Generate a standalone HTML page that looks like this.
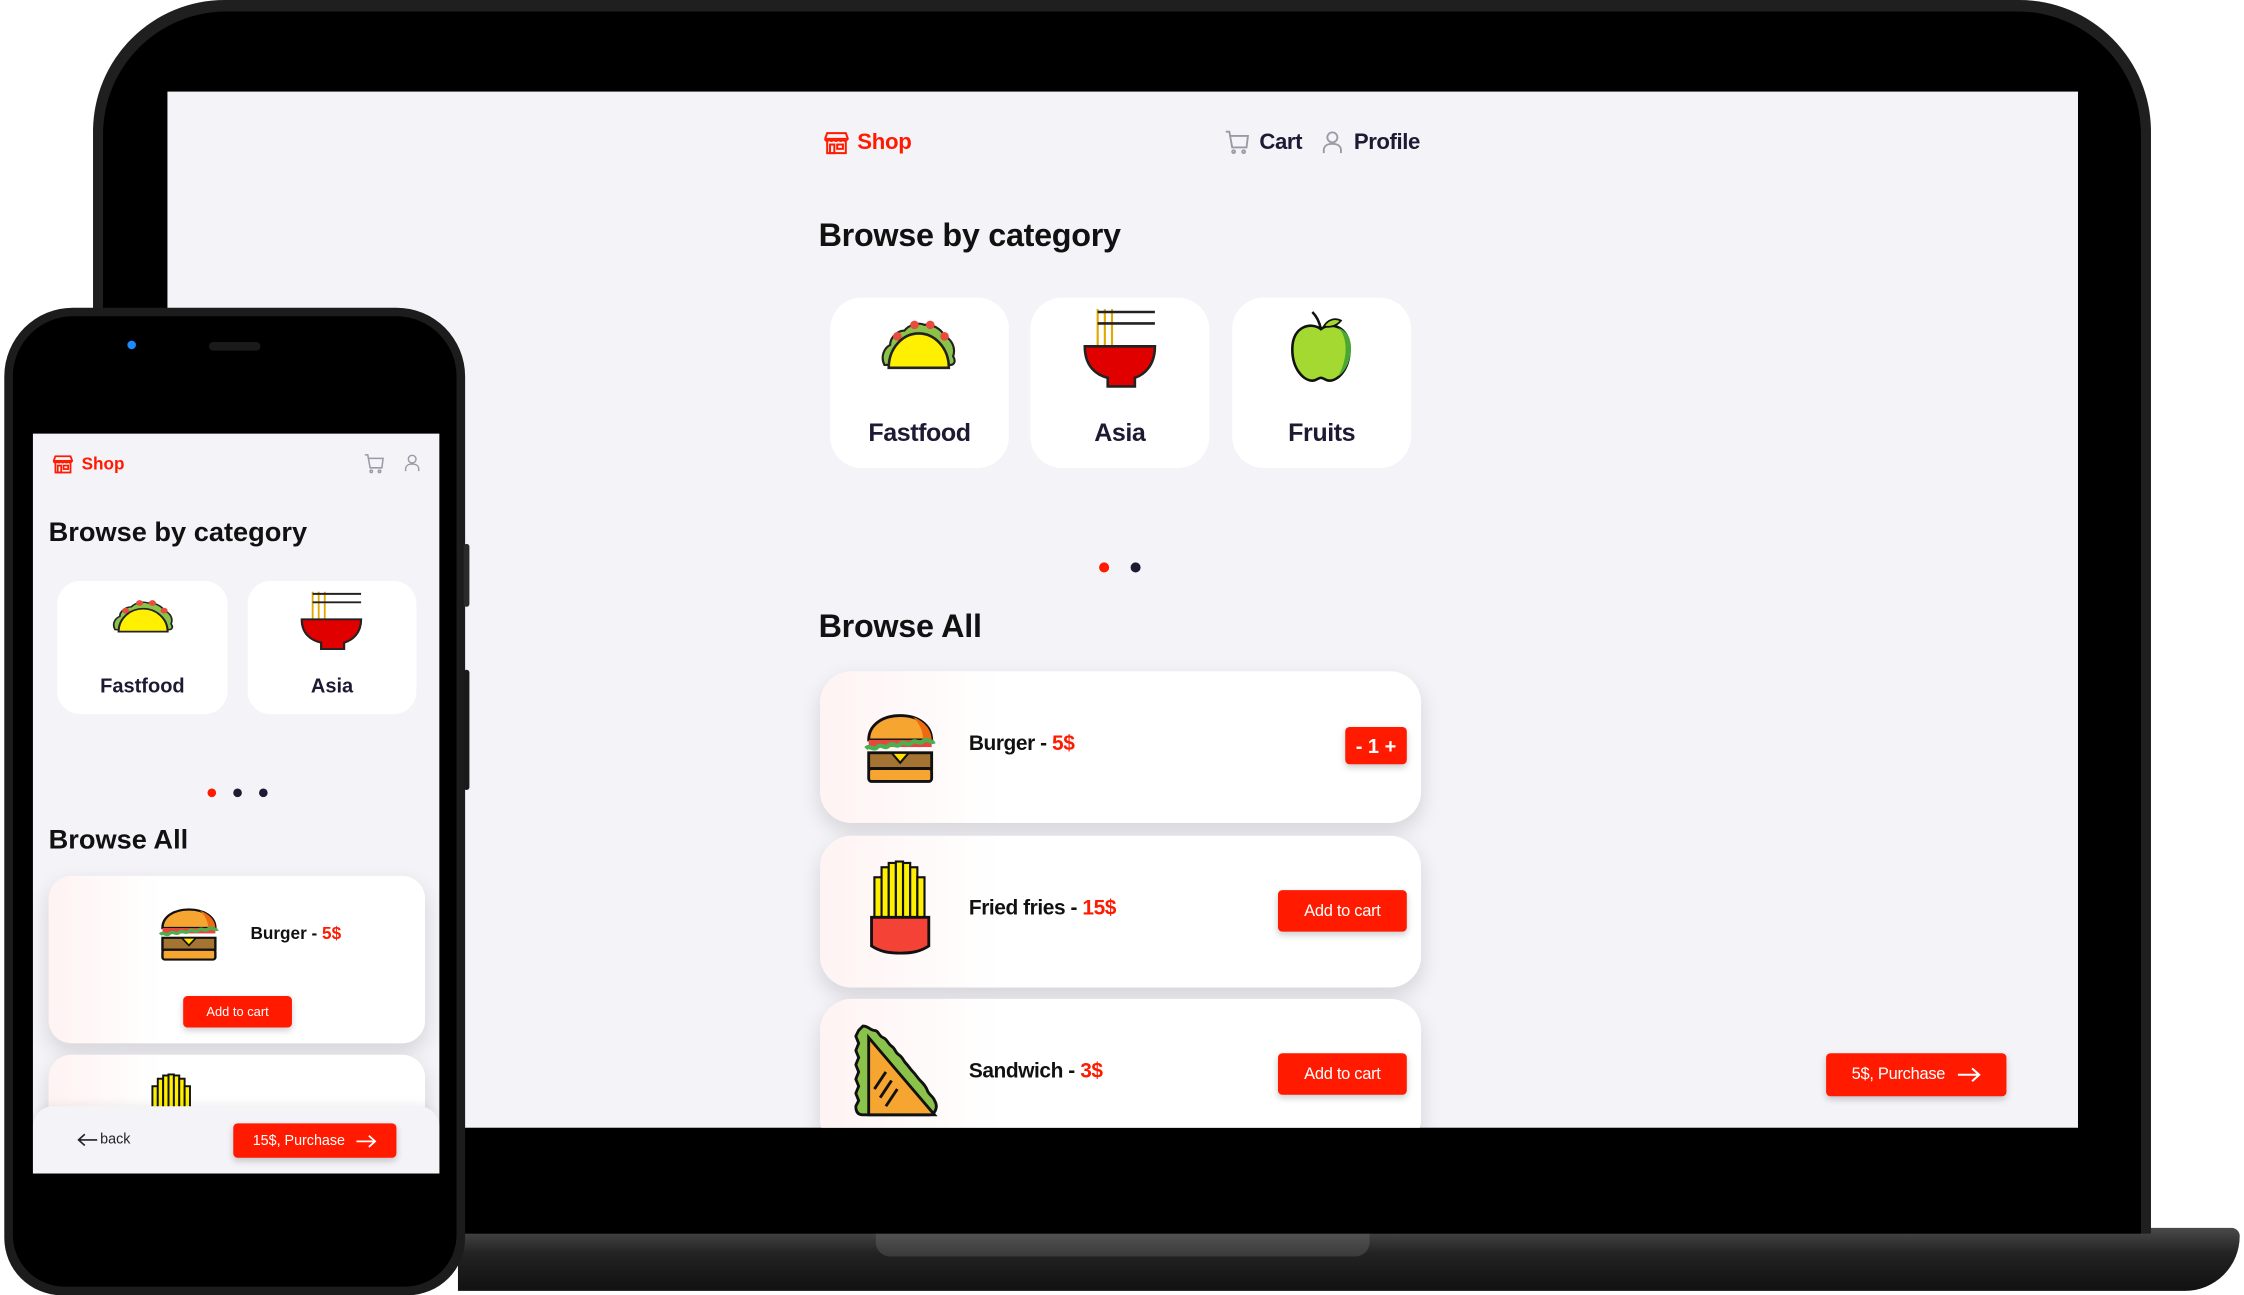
<!DOCTYPE html>
<html><head><meta charset="utf-8"><style>
*{margin:0;padding:0;box-sizing:border-box}
html,body{width:2244px;height:1295px;overflow:hidden;background:#fff;font-family:"Liberation Sans",Arial,sans-serif}
#stage{position:absolute;left:0;top:0;width:1568px;height:905px;transform:scale(1.43112);transform-origin:0 0}
.a{position:absolute}
.red{color:#ff1a00}
.navy{color:#1d1a33}
.card{position:absolute;background:#fff;border-radius:22px}
.pc{position:absolute;background:linear-gradient(90deg,#fff3f3 0%,#fff 30%);border-radius:22px;box-shadow:0 6px 14px rgba(0,0,0,.13)}
.btn{position:absolute;background:#ff1a00;color:#fff;border-radius:3px;display:flex;align-items:center;justify-content:center;box-shadow:0 2px 5px rgba(0,0,0,.2)}
.t{position:absolute;white-space:nowrap;font-weight:bold}
</style></head><body><div id="stage">

<!-- laptop base -->
<div class="a" style="left:320px;top:858px;width:1245px;height:44px;background:linear-gradient(#4a4a4a,#232323 40%,#111);border-radius:0 6px 40px 0"></div>
<div class="a" style="left:612px;top:860px;width:345px;height:18px;background:linear-gradient(#555,#3a3a3a);border-radius:0 0 10px 10px"></div>
<!-- laptop lid -->
<div class="a" style="left:65px;top:0;width:1438px;height:862px;background:#1f1f1f;border-radius:92px 92px 0 0"></div>
<div class="a" style="left:72px;top:8px;width:1424px;height:854px;background:#000;border-radius:86px 86px 0 0"></div>
<div class="a" style="left:117px;top:64px;width:1335px;height:724px;background:#f4f3f8;overflow:hidden">
 <svg class="a" style="left:459px;top:28px" width="17" height="16" viewBox="0 0 17 16" fill="none" stroke="#ff1a00" stroke-width="1.4"><path d="M2 1h13l1.5 4h-16z"/><path d="M.5 5c0 2 3 2 3 0c0 2 3 2 3 0c0 2 3.5 2 3.5 0c0 2 3 2 3 0c0 2 3 2 3 0"/><path d="M2 7v8h13V7"/><rect x="4" y="9" width="3" height="6"/><rect x="9" y="9" width="4" height="3"/></svg>
 <div class="t red" style="left:482px;top:27px;font-size:15.5px;letter-spacing:-.2px">Shop</div>
 <svg class="a" style="left:739px;top:27px" width="17" height="17" viewBox="0 0 17 17" fill="none" stroke="#9a9aa6" stroke-width="1.3"><path d="M.5 1h2.5l2 11h10l1-8H4"/><circle cx="6" cy="15" r="1"/><circle cx="13" cy="15" r="1"/></svg>
 <div class="t navy" style="left:763px;top:27px;font-size:15.5px;letter-spacing:-.3px">Cart</div>
 <svg class="a" style="left:807px;top:27px" width="14" height="17" viewBox="0 0 14 17" fill="none" stroke="#9a9aa6" stroke-width="1.3"><circle cx="7" cy="5" r="3.5"/><path d="M1 16v-2c0-3 2.5-4.5 6-4.5s6 1.5 6 4.5v2"/></svg>
 <div class="t navy" style="left:829px;top:27px;font-size:15.5px;letter-spacing:-.3px">Profile</div>

 <div class="t" style="left:455px;top:88px;font-size:22.6px;letter-spacing:-.2px;color:#111">Browse by category</div>

 <div class="card" style="left:463px;top:144px;width:125px;height:119px"></div>
 <div class="card" style="left:603px;top:144px;width:125px;height:119px"></div>
 <div class="card" style="left:744px;top:144px;width:125px;height:119px"></div>
 <svg class="a" style="left:498px;top:155px" width="54" height="45" viewBox="0 0 54 45"><path d="M3 36c-3-6 0-12 4-14c0-6 6-10 10-10c3-4 10-6 14-4c5-1 12 3 14 8c5 2 8 8 6 14c2 3 1 6-2 6H3z" fill="#8bc34a" stroke="#222" stroke-width="1.5"/><circle cx="12" cy="16" r="3" fill="#e74c3c"/><circle cx="24" cy="8" r="3" fill="#e74c3c"/><circle cx="35" cy="8" r="3" fill="#e74c3c"/><circle cx="45" cy="16" r="3" fill="#e74c3c"/><path d="M6 38c0-14 10-24 21-24s21 10 21 24z" fill="#ffef00" stroke="#222" stroke-width="1.8"/></svg>
 <svg class="a" style="left:640px;top:150px" width="52" height="58" viewBox="0 0 52 58"><g stroke="#e0a800" stroke-width="1.5"><path d="M10 2v36M15 2v36M20 2v36"/></g><g stroke="#222" stroke-width="1.8"><path d="M10 4h40M10 12h40"/></g><path d="M1 28h49c0 14-8 20-14 22v6H17v-6C9 48 1 42 1 28z" fill="#e00000" stroke="#222" stroke-width="1.8"/></svg>
 <svg class="a" style="left:782px;top:152px" width="48" height="52" viewBox="0 0 48 52"><path d="M24 14c-6-5-20-3-20 14c0 14 8 22 14 22c3 0 4-2 6-2s3 2 6 2c6 0 14-8 14-22c0-17-14-19-20-14z" fill="#a3d930" stroke="#111" stroke-width="1.8"/><path d="M36 13c6 5 8 20 0 34c6-4 9-12 9-20c0-7-3-12-9-14z" fill="#4aa832"/><path d="M24 14c-1-5-3-9-6-12" stroke="#111" stroke-width="1.8" fill="none"/><path d="M26 12c3-5 8-6 12-4c-3 4-8 5-12 4z" fill="#a3d930" stroke="#111" stroke-width="1.2"/></svg>
 <div class="t navy" style="left:463px;top:228px;width:125px;text-align:center;font-size:17.5px;letter-spacing:-.3px">Fastfood</div>
 <div class="t navy" style="left:603px;top:228px;width:125px;text-align:center;font-size:17.5px;letter-spacing:-.3px">Asia</div>
 <div class="t navy" style="left:744px;top:228px;width:125px;text-align:center;font-size:17.5px;letter-spacing:-.3px">Fruits</div>

 <div class="a" style="left:651px;top:329px;width:7px;height:7px;border-radius:50%;background:#ff1a00"></div>
 <div class="a" style="left:673px;top:329px;width:7px;height:7px;border-radius:50%;background:#1d1a33"></div>

 <div class="t" style="left:455px;top:361px;font-size:22.6px;letter-spacing:-.2px;color:#111">Browse All</div>

 <div class="pc" style="left:456px;top:405px;width:420px;height:106px"></div>
 <div class="pc" style="left:456px;top:520px;width:420px;height:106px"></div>
 <div class="pc" style="left:456px;top:634px;width:420px;height:106px"></div>

 <svg class="a" style="left:487px;top:434px" width="50" height="50" viewBox="0 0 50 50"><path d="M3 19c0-10 9-17 22-17s22 7 22 17z" fill="#f7a531" stroke="#111" stroke-width="2"/><path d="M34 3c8 3 13 9 13 16h-6c0-7-3-12-7-16z" fill="#ee6a10"/><rect x="3" y="19" width="44" height="5" fill="#e8463c"/><path d="M1 25c3-3 5 2 8-1s5 2 8-1 5 2 8-1 5 2 8-1 5 2 8-1 5 2 8 0" stroke="#4caf50" stroke-width="3" fill="none"/><rect x="3" y="28" width="44" height="11" fill="#a57332" stroke="#111" stroke-width="2"/><path d="M19 28l6 7 6-7z" fill="#ffe000" stroke="#111" stroke-width="1.5"/><rect x="3" y="39" width="44" height="9" rx="2" fill="#f7a531" stroke="#111" stroke-width="2"/></svg>
 <svg class="a" style="left:490px;top:537px" width="44" height="66" viewBox="0 0 44 66"><g fill="#ffef00" stroke="#111" stroke-width="1.5"><rect x="4" y="12" width="5" height="30"/><rect x="9" y="5" width="5" height="37"/><rect x="14" y="2" width="5" height="40"/><rect x="19" y="1" width="5" height="41"/><rect x="24" y="2" width="5" height="40"/><rect x="29" y="5" width="5" height="37"/><rect x="34" y="12" width="5" height="30"/></g><path d="M2 40h40v20c-6 4-12 5-20 5s-14-1-20-5z" fill="#f44336" stroke="#111" stroke-width="2"/></svg>
 <svg class="a" style="left:480px;top:651px" width="62" height="72" viewBox="0 0 62 72"><path d="M6 2c4 0 5 3 8 3s3 4 6 5 3 4 6 6 2 4 5 6 3 4 5 6 3 4 5 6 3 4 5 6 4 4 5 7 4 4 5 7c3 5 0 10-4 10H6c-4 0-5-3-5-6l2-4-2-5 2-5-2-5 2-5-2-5 2-5-2-5 2-5-2-5 2-4z" fill="#8bc34a" stroke="#111" stroke-width="2"/><path d="M10 10l46 54H10z" fill="#f7a531" stroke="#111" stroke-width="2"/><path d="M22 34l-8 12M26 40l-8 12M30 46l-8 12" stroke="#111" stroke-width="2"/></svg>

 <div class="t" style="left:560px;top:448px;font-size:14.6px;letter-spacing:-.3px;color:#111">Burger - <span class="red">5$</span></div>
 <div class="t" style="left:560px;top:563px;font-size:14.6px;letter-spacing:-.3px;color:#111">Fried fries - <span class="red">15$</span></div>
 <div class="t" style="left:560px;top:677px;font-size:14.6px;letter-spacing:-.3px;color:#111">Sandwich - <span class="red">3$</span></div>

 <div class="btn" style="left:823px;top:444px;width:43px;height:26px;font-size:14px;font-weight:bold">-&nbsp;1&nbsp;+</div>
 <div class="btn" style="left:776px;top:558px;width:90px;height:29px;font-size:11.5px;letter-spacing:-.2px">Add to cart</div>
 <div class="btn" style="left:776px;top:672px;width:90px;height:29px;font-size:11.5px;letter-spacing:-.2px">Add to cart</div>
 <div class="btn" style="left:1159px;top:672px;width:126px;height:30px;font-size:11.5px;letter-spacing:-.2px">5$, Purchase&nbsp;&nbsp;&nbsp;<svg width="16" height="10" viewBox="0 0 16 10" fill="none" stroke="#fff" stroke-width="1.4"><path d="M0 5h15M10 .5l5 4.5-5 4.5"/></svg></div>
</div>

<!-- phone -->
<div class="a" style="left:3px;top:215px;width:322px;height:690px;background:#1c1c1c;border-radius:48px 48px 40px 40px"></div>
<div class="a" style="left:324px;top:380px;width:4px;height:44px;background:#2a2a2a;border-radius:2px"></div>
<div class="a" style="left:324px;top:468px;width:4px;height:84px;background:#1a1a1a;border-radius:2px"></div>
<div class="a" style="left:9px;top:221px;width:310px;height:678px;background:#000;border-radius:42px 42px 36px 36px"></div>
<div class="a" style="left:89px;top:238px;width:6px;height:6px;border-radius:50%;background:#1a8cff"></div>
<div class="a" style="left:146px;top:239px;width:36px;height:6px;border-radius:3px;background:#1a1a1a"></div>
<div class="a" style="left:23px;top:303px;width:284px;height:517px;background:#f4f3f8;overflow:hidden">
 <svg class="a" style="left:14px;top:15px" width="14" height="13" viewBox="0 0 17 16" fill="none" stroke="#ff1a00" stroke-width="1.5"><path d="M2 1h13l1.5 4h-16z"/><path d="M.5 5c0 2 3 2 3 0c0 2 3 2 3 0c0 2 3.5 2 3.5 0c0 2 3 2 3 0c0 2 3 2 3 0"/><path d="M2 7v8h13V7"/><rect x="4" y="9" width="3" height="6"/><rect x="9" y="9" width="4" height="3"/></svg>
 <div class="t red" style="left:34px;top:14px;font-size:12px">Shop</div>
 <svg class="a" style="left:231px;top:14px" width="15" height="14" viewBox="0 0 17 17" fill="none" stroke="#9a9aa6" stroke-width="1.3"><path d="M.5 1h2.5l2 11h10l1-8H4"/><circle cx="6" cy="15" r="1"/><circle cx="13" cy="15" r="1"/></svg>
 <svg class="a" style="left:259px;top:14px" width="12" height="13" viewBox="0 0 14 17" fill="none" stroke="#9a9aa6" stroke-width="1.3"><circle cx="7" cy="5" r="3.5"/><path d="M1 16v-2c0-3 2.5-4.5 6-4.5s6 1.5 6 4.5v2"/></svg>
 <div class="t" style="left:11px;top:59px;font-size:19px;color:#111">Browse by category</div>
 <div class="card" style="left:17px;top:103px;width:119px;height:93px;border-radius:16px"></div>
 <div class="card" style="left:150px;top:103px;width:118px;height:93px;border-radius:16px"></div>
 <svg class="a" style="left:55px;top:113px" width="44" height="30" viewBox="0 0 54 45" preserveAspectRatio="none"><path d="M3 36c-3-6 0-12 4-14c0-6 6-10 10-10c3-4 10-6 14-4c5-1 12 3 14 8c5 2 8 8 6 14c2 3 1 6-2 6H3z" fill="#8bc34a" stroke="#222" stroke-width="1.5"/><circle cx="12" cy="16" r="3" fill="#e74c3c"/><circle cx="24" cy="8" r="3" fill="#e74c3c"/><circle cx="35" cy="8" r="3" fill="#e74c3c"/><circle cx="45" cy="16" r="3" fill="#e74c3c"/><path d="M6 38c0-14 10-24 21-24s21 10 21 24z" fill="#ffef00" stroke="#222" stroke-width="1.8"/></svg>
 <svg class="a" style="left:187px;top:109px" width="44" height="43" viewBox="0 0 52 58" preserveAspectRatio="none"><g stroke="#e0a800" stroke-width="1.5"><path d="M10 2v36M15 2v36M20 2v36"/></g><g stroke="#222" stroke-width="1.8"><path d="M10 4h40M10 12h40"/></g><path d="M1 28h49c0 14-8 20-14 22v6H17v-6C9 48 1 42 1 28z" fill="#e00000" stroke="#222" stroke-width="1.8"/></svg>
 <div class="t navy" style="left:17px;top:168px;width:119px;text-align:center;font-size:14px">Fastfood</div>
 <div class="t navy" style="left:150px;top:168px;width:118px;text-align:center;font-size:14px">Asia</div>
 <div class="a" style="left:122px;top:248px;width:6px;height:6px;border-radius:50%;background:#ff1a00"></div>
 <div class="a" style="left:140px;top:248px;width:6px;height:6px;border-radius:50%;background:#1d1a33"></div>
 <div class="a" style="left:158px;top:248px;width:6px;height:6px;border-radius:50%;background:#1d1a33"></div>
 <div class="t" style="left:11px;top:274px;font-size:19px;color:#111">Browse All</div>
 <div class="pc" style="left:11px;top:309px;width:263px;height:117px;border-radius:16px"></div>
 <div class="pc" style="left:11px;top:434px;width:263px;height:80px;border-radius:16px"></div>
 <svg class="a" style="left:88px;top:331px" width="42" height="38" viewBox="0 0 50 50" preserveAspectRatio="none"><path d="M3 19c0-10 9-17 22-17s22 7 22 17z" fill="#f7a531" stroke="#111" stroke-width="2"/><path d="M34 3c8 3 13 9 13 16h-6c0-7-3-12-7-16z" fill="#ee6a10"/><rect x="3" y="19" width="44" height="5" fill="#e8463c"/><path d="M1 25c3-3 5 2 8-1s5 2 8-1 5 2 8-1 5 2 8-1 5 2 8-1 5 2 8 0" stroke="#4caf50" stroke-width="3" fill="none"/><rect x="3" y="28" width="44" height="11" fill="#a57332" stroke="#111" stroke-width="2"/><path d="M19 28l6 7 6-7z" fill="#ffe000" stroke="#111" stroke-width="1.5"/><rect x="3" y="39" width="44" height="9" rx="2" fill="#f7a531" stroke="#111" stroke-width="2"/></svg>
 <div class="t" style="left:152px;top:342px;font-size:12px;color:#111">Burger - <span class="red">5$</span></div>
 <div class="btn" style="left:105px;top:393px;width:76px;height:22px;font-size:9px">Add to cart</div>
 <svg class="a" style="left:80px;top:447px" width="34" height="30" viewBox="0 0 44 40"><g fill="#ffef00" stroke="#111" stroke-width="1.8"><rect x="4" y="12" width="5" height="30"/><rect x="9" y="5" width="5" height="37"/><rect x="14" y="2" width="5" height="40"/><rect x="19" y="1" width="5" height="41"/><rect x="24" y="2" width="5" height="40"/><rect x="29" y="5" width="5" height="37"/><rect x="34" y="12" width="5" height="30"/></g></svg>
 <div class="a" style="left:0;top:470px;width:284px;height:47px;background:#f4f3f8;border-radius:14px 14px 0 0;box-shadow:0 -2px 6px rgba(0,0,0,.05)"></div>
 <svg class="a" style="left:31px;top:489px" width="14" height="9" viewBox="0 0 16 10" fill="none" stroke="#222" stroke-width="1.3"><path d="M16 5H1M6 .5L1 5l5 4.5"/></svg>
 <div class="a" style="left:47px;top:488px;font-size:10px;color:#222">back</div>
 <div class="btn" style="left:140px;top:482px;width:114px;height:24px;font-size:10px">15$, Purchase&nbsp;&nbsp;&nbsp;<svg width="14" height="9" viewBox="0 0 16 10" fill="none" stroke="#fff" stroke-width="1.4"><path d="M0 5h15M10 .5l5 4.5-5 4.5"/></svg></div>
</div>

</div></body></html>
